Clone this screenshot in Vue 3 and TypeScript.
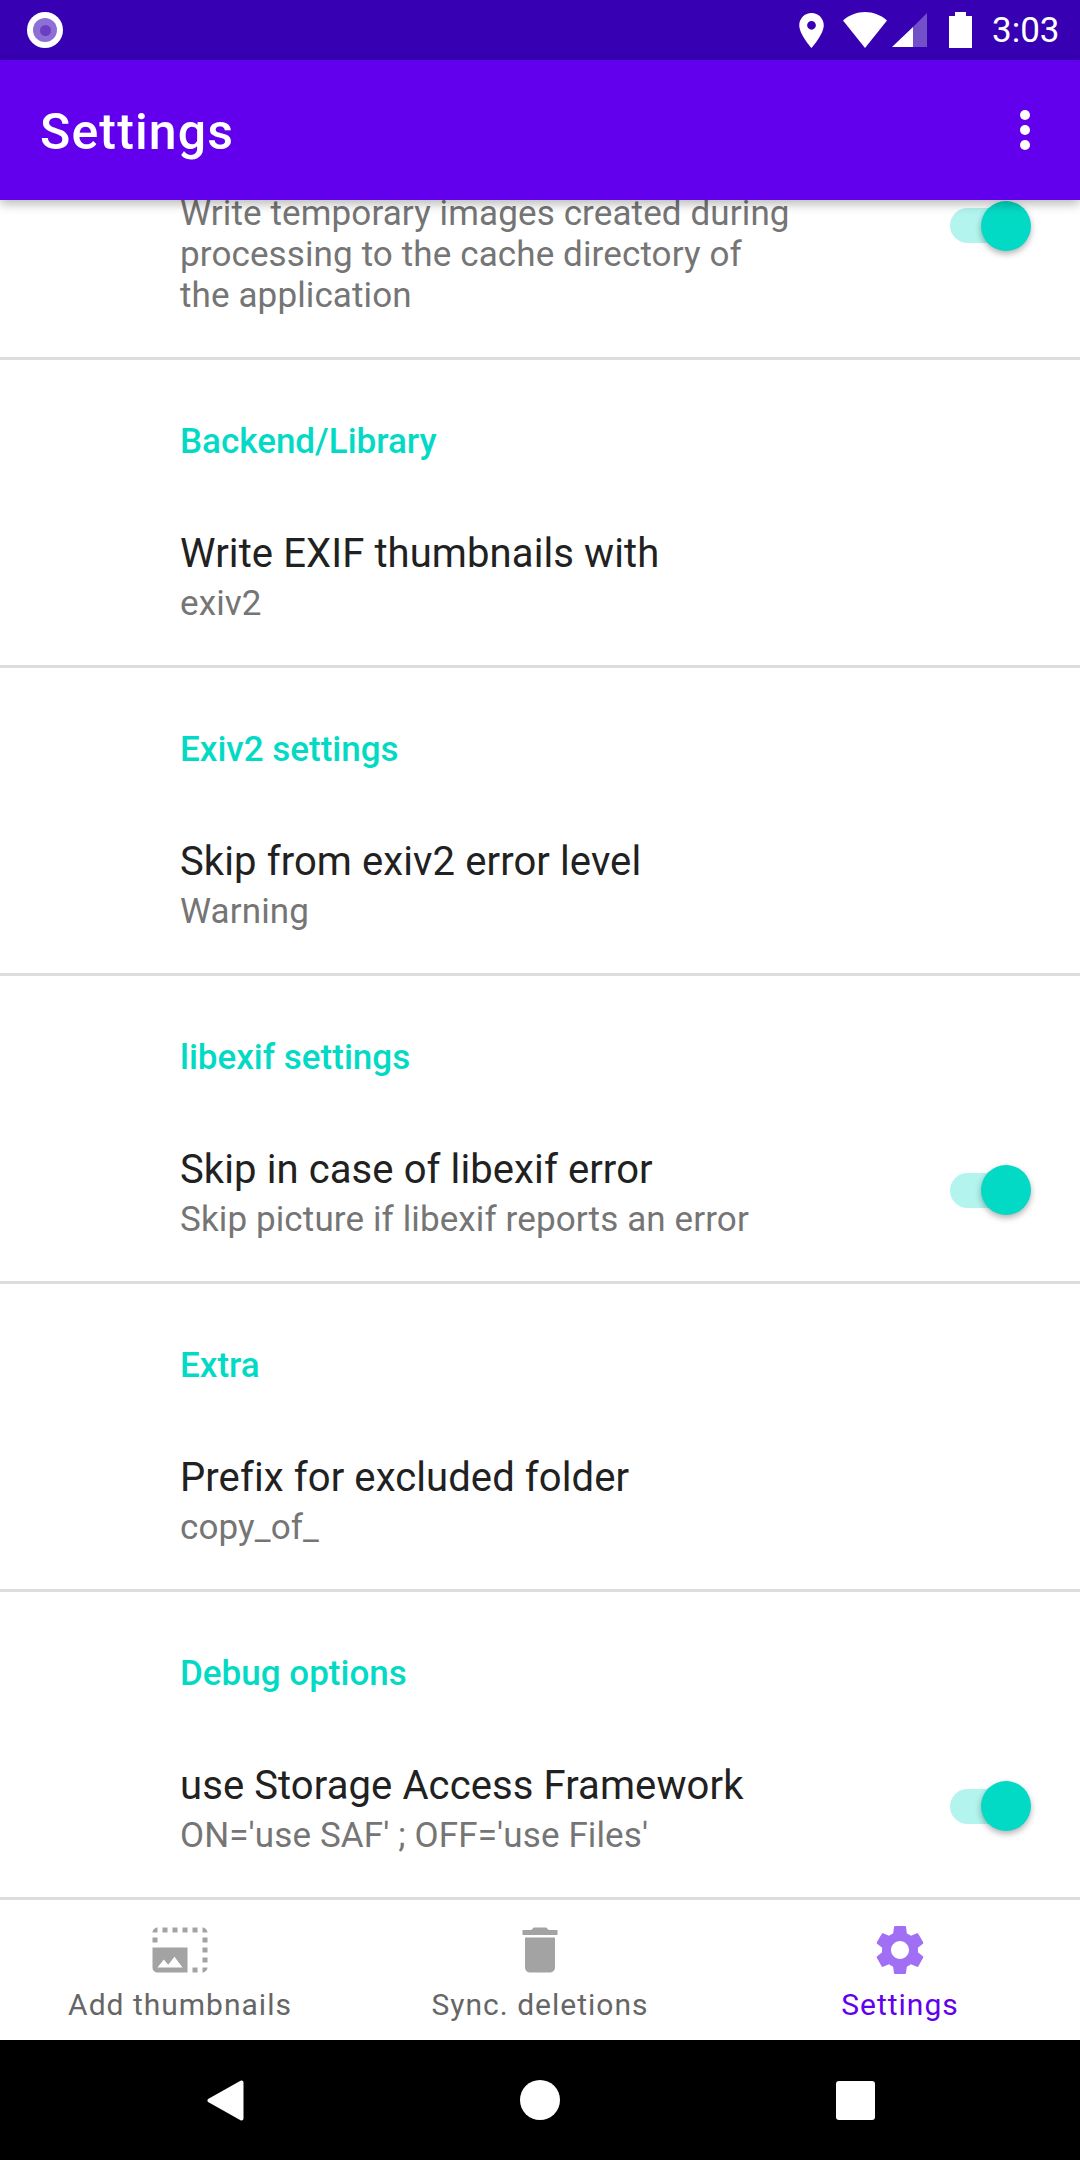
<template>
  <div class="page">
    <div class="status-bar">
      <div class="notif"><span class="notif-inner"><span class="notif-dot" /></span></div>
      <div class="status-icons">
        <svg class="ic-pin" viewBox="5 2 14 20"><path d="M12 2C8.13 2 5 5.13 5 9c0 5.25 7 13 7 13s7-7.75 7-13c0-3.87-3.13-7-7-7zm0 9.5a2.5 2.5 0 0 1 0-5 2.5 2.5 0 0 1 0 5z" fill="#fff" /></svg>
        <svg class="ic-wifi" viewBox="0 0 44 36"><path d="M22 36 0 8.5C6 3 14 0 22 0s16 3 22 8.5z" fill="#fff" /></svg>
        <svg class="ic-signal" viewBox="0 0 35 34">
          <path d="M35 0v34H21V14z" fill="#7450c8" />
          <path d="M0 34 21 14v20z" fill="#fff" />
        </svg>
        <svg class="ic-battery" viewBox="0 0 23 36"><path d="M6 0h11v4h6v32H0V4h6z" fill="#fff" /></svg>
        <span class="clock">3:03</span>
      </div>
    </div>

    <header class="toolbar">
      <span class="toolbar-title">Settings</span>
      <svg class="ic-more" viewBox="0 0 10 40">
        <circle cx="5" cy="5" r="5" fill="#fff" />
        <circle cx="5" cy="20" r="5" fill="#fff" />
        <circle cx="5" cy="35" r="5" fill="#fff" />
      </svg>
    </header>

    <main class="scroller">
      <section class="section">
        <div class="row row-first">
          <div class="text">
            <div class="summary summary-first">Write temporary images created during processing to the cache directory of the application</div>
          </div>
          <div class="switch switch-first"><span class="thumb" /></div>
        </div>
      </section>
      <section v-for="s in sections" :key="s.category" class="section">
        <div class="category">{{ s.category }}</div>
        <div class="row">
          <div class="text">
            <div class="title">{{ s.title }}</div>
            <div class="summary">{{ s.summary }}</div>
          </div>
          <div v-if="s.toggle" class="switch"><span class="thumb" /></div>
        </div>
      </section>
    </main>

    <nav class="bottom-nav">
      <div v-for="t in tabs" :key="t.label" :class="['tab', { active: t.active }]">
        <svg class="tab-icon" viewBox="0 0 24 24"><path :d="t.icon" /></svg>
        <span class="tab-label">{{ t.label }}</span>
      </div>
    </nav>

    <div class="nav-bar">
      <svg class="nav-back" viewBox="0 0 37 41"><path d="M34.5 2.5v36L2.5 20.5z" fill="#fff" stroke="#fff" stroke-width="4" stroke-linejoin="round" /></svg>
      <span class="nav-home" />
      <span class="nav-recent" />
    </div>
  </div>
</template>

<script setup lang="ts">
interface Section {
  category: string
  title: string
  summary: string
  toggle?: boolean
}

const sections: Section[] = [
  { category: 'Backend/Library', title: 'Write EXIF thumbnails with', summary: 'exiv2' },
  { category: 'Exiv2 settings', title: 'Skip from exiv2 error level', summary: 'Warning' },
  { category: 'libexif settings', title: 'Skip in case of libexif error', summary: 'Skip picture if libexif reports an error', toggle: true },
  { category: 'Extra', title: 'Prefix for excluded folder', summary: 'copy_of_' },
  { category: 'Debug options', title: 'use Storage Access Framework', summary: "ON='use SAF' ; OFF='use Files'", toggle: true }
]

const tabs = [
  {
    label: 'Add thumbnails',
    icon: 'M21 15h2v2h-2v-2zm0-4h2v2h-2v-2zm2 8h-2v2c1 0 2-1 2-2zM13 3h2v2h-2V3zm8 4h2v2h-2V7zm0-4v2h2c0-1-1-2-2-2zM1 7h2v2H1V7zm16-4h2v2h-2V3zm0 16h2v2h-2v-2zM3 3C2 3 1 4 1 5h2V3zm6 0h2v2H9V3zM5 3h2v2H5V3zm-4 8v8c0 1.1.9 2 2 2h12V11H1zm2 8l2.5-3.21 1.79 2.15 2.5-3.22L13 19H3z'
  },
  {
    label: 'Sync. deletions',
    icon: 'M6 19c0 1.1.9 2 2 2h8c1.1 0 2-.9 2-2V7H6v12zM19 4h-3.5l-1-1h-5l-1 1H5v2h14V4z'
  },
  {
    label: 'Settings',
    active: true,
    icon: 'M19.14 12.94c.04-.3.06-.61.06-.94 0-.32-.02-.64-.07-.94l2.03-1.58c.18-.14.23-.41.12-.61l-1.92-3.32c-.12-.22-.37-.29-.59-.22l-2.39.96c-.5-.38-1.03-.7-1.62-.94l-.36-2.54c-.04-.24-.24-.41-.48-.41h-3.84c-.24 0-.43.17-.47.41l-.36 2.54c-.59.24-1.13.57-1.62.94l-2.39-.96c-.22-.08-.47 0-.59.22L2.74 8.87c-.12.21-.08.47.12.61l2.03 1.58c-.05.3-.09.63-.09.94s.02.64.07.94l-2.03 1.58c-.18.14-.23.41-.12.61l1.92 3.32c.12.22.37.29.59.22l2.39-.96c.5.38 1.03.7 1.62.94l.36 2.54c.05.24.24.41.48.41h3.84c.24 0 .44-.17.47-.41l.36-2.54c.59-.24 1.13-.56 1.62-.94l2.39.96c.22.08.47 0 .59-.22l1.92-3.32c.12-.22.07-.47-.12-.61l-2.01-1.58zM12 15.6c-1.98 0-3.6-1.62-3.6-3.6s1.62-3.6 3.6-3.6 3.6 1.62 3.6 3.6-1.62 3.6-3.6 3.6z'
  }
]
</script>

<style scoped>
.page {
  display: flex;
  flex-direction: column;
  width: 1080px;
  height: 2160px;
  overflow: hidden;
  background: #fff;
  font-family: Roboto, sans-serif;
}

.status-bar {
  display: flex;
  align-items: center;
  flex: none;
  height: 60px;
  padding: 0 20px 0 27px;
  background: #3700b3;
}

.notif {
  display: flex;
  align-items: center;
  justify-content: center;
  width: 36px;
  height: 36px;
  border-radius: 50%;
  background: #fff;
}

.notif-inner {
  display: flex;
  align-items: center;
  justify-content: center;
  width: 24px;
  height: 24px;
  border-radius: 50%;
  background: #8e6fd6;
}

.notif-dot {
  width: 11px;
  height: 11px;
  border-radius: 50%;
  background: #6a3fc4;
}

.status-icons {
  display: flex;
  align-items: center;
  margin-left: auto;
}

.ic-pin {
  width: 25px;
  height: 35px;
  margin-right: 19px;
}

.ic-wifi {
  width: 44px;
  height: 36px;
  margin-right: 5px;
}

.ic-signal {
  width: 35px;
  height: 34px;
  margin-right: 22px;
}

.ic-battery {
  width: 23px;
  height: 36px;
  margin-right: 20px;
}

.clock {
  width: 68px;
  font-size: 35px;
  line-height: 41px;
  color: #fff;
}

.toolbar {
  position: relative;
  z-index: 2;
  display: flex;
  align-items: center;
  justify-content: space-between;
  flex: none;
  height: 140px;
  padding: 0 50px 0 40px;
  background: #6200ee;
  box-shadow: 0 4px 10px rgba(0, 0, 0, 0.28);
}

.toolbar-title {
  margin-top: 3px;
  font-size: 50px;
  font-weight: 500;
  letter-spacing: 1.15px;
  color: #fff;
}

.ic-more {
  width: 10px;
  height: 40px;
}

.scroller {
  flex: 1;
  min-height: 0;
  overflow: hidden;
}

.section {
  border-bottom: 3px solid #dddddd;
}

.category {
  padding: 61px 0 0 180px;
  font-size: 35px;
  font-weight: 500;
  line-height: 41px;
  color: #03dac5;
}

.row {
  display: flex;
  align-items: center;
  padding: 68px 55px 41px 180px;
}

.row-first {
  align-items: flex-start;
  padding-top: 0;
}

.text {
  flex: 1;
  max-width: 615px;
  margin-right: auto;
}

.title {
  margin-bottom: 6px;
  font-size: 40px;
  line-height: 47px;
  letter-spacing: 0.1px;
  color: #212121;
}

.summary {
  font-size: 35px;
  line-height: 41px;
  letter-spacing: 0.12px;
  color: #757575;
}

.summary-first {
  margin-top: -7px;
}

.switch {
  display: flex;
  align-items: center;
  justify-content: flex-end;
  flex: none;
  width: 75px;
  height: 35px;
  margin-bottom: 6px;
  border-radius: 18px;
  background: #b3f4ee;
}

.switch-first {
  margin-top: 8px;
}

.thumb {
  flex: none;
  width: 50px;
  height: 50px;
  margin-right: -6px;
  border-radius: 50%;
  background: #03dac5;
  box-shadow: 0 3px 6px rgba(0, 0, 0, 0.3);
}

.bottom-nav {
  display: flex;
  flex: none;
  height: 140px;
  background: #fff;
}

.tab {
  display: flex;
  flex: 1;
  flex-direction: column;
  align-items: center;
  padding-top: 20px;
  color: #666666;
}

.tab-icon {
  width: 60px;
  height: 60px;
  fill: #a3a3a3;
}

.tab-label {
  margin-top: 7px;
  font-size: 30px;
  line-height: 35px;
  letter-spacing: 1px;
}

.tab.active {
  color: #6200ee;
}

.tab.active .tab-icon {
  fill: #a06ff3;
}

.nav-bar {
  display: flex;
  align-items: center;
  flex: none;
  height: 120px;
  padding-left: 207px;
  background: #000;
}

.nav-back {
  width: 37px;
  height: 41px;
}

.nav-home {
  width: 40px;
  height: 40px;
  margin-left: 276px;
  border-radius: 50%;
  background: #fff;
}

.nav-recent {
  width: 39px;
  height: 39px;
  margin-left: 276px;
  border-radius: 3px;
  background: #fff;
}
</style>
